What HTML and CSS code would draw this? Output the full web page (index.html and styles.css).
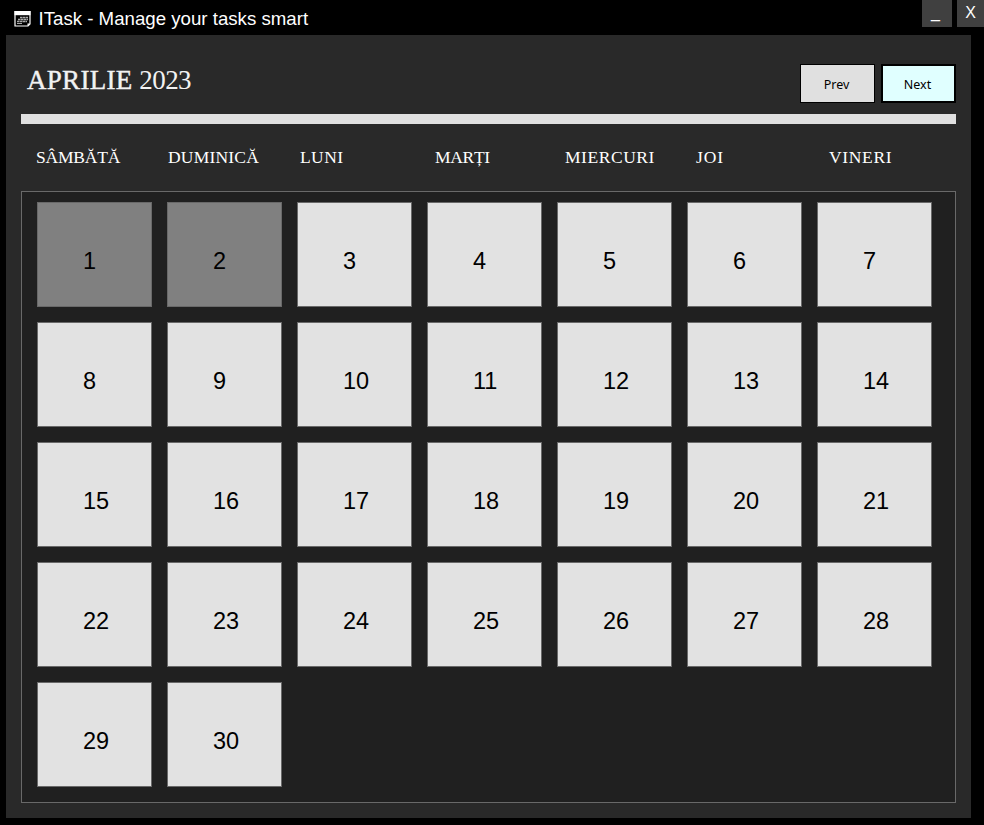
FILE: index.html
```
<!DOCTYPE html>
<html lang="ro">
<head>
<meta charset="utf-8">
<title>ITask</title>
<link rel="stylesheet" href="styles.css">
</head>
<body>
<header class="titlebar">
  <svg class="logo" viewBox="0 0 17 17">
    <path d="M1 1.500h15v12.500l-2 2h-13z" fill="#000" stroke="#fff" stroke-width="1.200"/>
    <path d="M.5 1h16v4.200H.5z" fill="#fff"/>
    <path d="M6 7.500h8M4 9.500h10M3 11.500h10" stroke="#aaa" stroke-width="1.500" stroke-dasharray="2.600 .4"/>
    <path d="M3 13.500h5" stroke="#aaa" fill="none"/>
    <path d="M13.500 16v-2.500h2.500z" fill="#fff"/>
  </svg>
  <span class="app-name">ITask - Manage your tasks smart</span>
  <button class="win minimize">_</button>
  <button class="win close">X</button>
</header>
<main class="panel">
  <div class="toolbar">
    <h1 class="month"><span class="month-name">APRILIE</span> <span class="year">2023</span></h1>
    <button class="nav">Prev</button>
    <button class="nav next">Next</button>
  </div>
  <div class="rule"></div>
  <div class="weekdays">
    <span class="sam">SÂMBĂTĂ</span><span class="dum">DUMINICĂ</span><span class="lun">LUNI</span><span class="mar">MARȚI</span><span class="mie">MIERCURI</span><span class="joi">JOI</span><span class="vin">VINERI</span>
  </div>
  <div class="days">
    <div class="day past">1</div><div class="day past">2</div><div class="day">3</div><div class="day">4</div><div class="day">5</div><div class="day">6</div><div class="day">7</div>
    <div class="day">8</div><div class="day">9</div><div class="day">10</div><div class="day">11</div><div class="day">12</div><div class="day">13</div><div class="day">14</div>
    <div class="day">15</div><div class="day">16</div><div class="day">17</div><div class="day">18</div><div class="day">19</div><div class="day">20</div><div class="day">21</div>
    <div class="day">22</div><div class="day">23</div><div class="day">24</div><div class="day">25</div><div class="day">26</div><div class="day">27</div><div class="day">28</div>
    <div class="day">29</div><div class="day">30</div>
  </div>
</main>
</body>
</html>
```
FILE: styles.css
```
* { box-sizing: border-box; }
body {
  margin: 0;
  width: 984px;
  height: 825px;
  overflow: hidden;
  background: #000;
  font-family: "Liberation Sans", Arial, sans-serif;
}
button { margin: 0; padding: 0; font: inherit; border-radius: 0; }
.titlebar { display: flex; height: 35px; padding-left: 14px; color: #fff; }
.logo { width: 17px; height: 17px; margin-top: 10px; flex: none; }
.app-name { flex: 1; margin-left: 7.5px; font-size: 18.67px; line-height: 37px; white-space: nowrap; }
.win { width: 30px; height: 27px; border: 0; background: #404040; color: #fff; font-size: 16px; flex: none; }
.minimize { margin-right: 5px; padding: 0 3px 1px 0; }
.close { width: 27px; padding-bottom: 2px; }
.panel { width: 965px; height: 783px; margin-left: 6px; padding: 29px 15px 0; background: #292929; }
.toolbar { display: flex; height: 50px; }
.month {
  flex: 1;
  margin: 0;
  padding-left: 6px;
  color: #f2f2f2;
  font: 400 27px/33px "Liberation Serif", serif;
}
.month-name { letter-spacing: .3px; -webkit-text-stroke: .4px #f2f2f2; }
.year { letter-spacing: -.6px; }
.nav {
  width: 75px;
  height: 39px;
  border: 1px solid #000;
  background: #e0e0e0;
  color: #000;
  font: 12.5px "Noto Sans", sans-serif;
  padding: 2px 2px 0 0;
}
.next { margin-left: 6px; border-width: 2px; background: #e0ffff; }
.rule { height: 10px; background: #e0e0e0; }
.weekdays {
  display: grid;
  grid-template-columns: 132px 132px 135px 130px 131px 133px 1fr;
  height: 67px;
  padding-left: 15px;
  color: #fff;
  font: 17.5px/67px "Liberation Serif", serif;
}
.sam { letter-spacing: -.2px; }
.dum { letter-spacing: .2px; }
.lun { letter-spacing: .4px; }
.mar { letter-spacing: -.3px; }
.mie { letter-spacing: .55px; }
.joi { letter-spacing: .9px; }
.vin { letter-spacing: .65px; }
.days {
  display: grid;
  grid-template-columns: repeat(7, 115px);
  grid-auto-rows: 105px;
  gap: 15px;
  align-content: start;
  height: 612px;
  padding: 10px 0 0 15px;
  border: 1px solid #696969;
  background: #202020;
}
.day {
  padding-left: 45px;
  border: 1px solid #696969;
  background: #e2e2e2;
  color: #000;
  font-size: 23.5px;
  line-height: 117px;
}
.past { background: #808080; }
```
